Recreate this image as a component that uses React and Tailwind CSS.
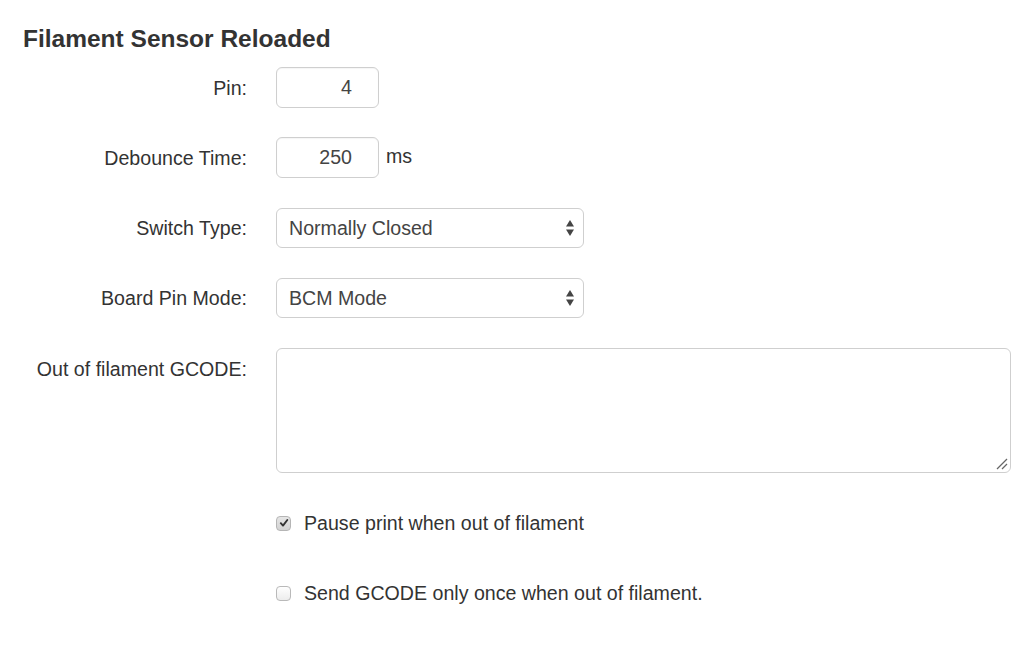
import React from "react";

function Label({ children, className = "" }) {
  return (
    <div className={"w-[224px] shrink-0 text-right text-[19.6px] text-[#333] leading-[28px] " + className}>
      {children}
    </div>
  );
}

function Arrows() {
  return (
    <svg width="10" height="18" viewBox="0 0 10 18" className="absolute right-[8px] top-[10px]">
      <path d="M1 7.5 L5 1 L9 7.5 Z" fill="#444" />
      <path d="M1 10.5 L5 17 L9 10.5 Z" fill="#444" />
    </svg>
  );
}

function Select({ value }) {
  return (
    <div className="relative w-[308px] h-[40px] rounded-[6px] border border-[#cfcfcf] bg-white flex items-center pl-[12px] pt-[2px] text-[19.6px] text-[#444]">
      {value}
      <Arrows />
    </div>
  );
}

function NumInput({ value }) {
  return (
    <div className="w-[103px] h-[41px] rounded-[6px] border border-[#cfcfcf] bg-white flex items-center justify-end pr-[26px] pt-[1px] text-[19.6px] text-[#444] shadow-[inset_0_1px_1px_rgba(0,0,0,0.04)]">
      {value}
    </div>
  );
}

function Checkbox({ checked }) {
  return (
    <div
      className={
        "w-[15px] h-[15px] rounded-[4px] border flex items-center justify-center " +
        (checked
          ? "border-[#b5b5b5] bg-gradient-to-b from-[#e6e6e6] to-[#d2d2d2]"
          : "border-[#b9b9b9] bg-gradient-to-b from-[#ffffff] to-[#ececec]")
      }
    >
      {checked && (
        <svg width="10" height="10" viewBox="0 0 10 10">
          <path d="M1.8 5.2 L4 7.6 L8.3 2" fill="none" stroke="#333" strokeWidth="1.9" strokeLinecap="round" strokeLinejoin="round" />
        </svg>
      )}
    </div>
  );
}

export default function App() {
  return (
    <div
      className="w-[1024px] h-[646px] bg-white pl-[23px] pt-[25px] overflow-hidden"
      style={{ fontFamily: '"Liberation Sans", Arial, Helvetica, sans-serif' }}
    >
      <h3 className="text-[24.5px] font-bold leading-[28px] text-[#333]">Filament Sensor Reloaded</h3>

      <div className="mt-[14px] flex flex-col">
        <div className="flex items-center gap-[29px] h-[41px]">
          <Label>Pin:</Label>
          <NumInput value="4" />
        </div>

        <div className="flex items-center gap-[29px] h-[41px] mt-[29px]">
          <Label>Debounce Time:</Label>
          <div className="flex items-start h-[41px]">
            <NumInput value="250" />
            <span className="ml-[7px] mt-[5px] text-[19.6px] leading-[28px] text-[#333]">ms</span>
          </div>
        </div>

        <div className="flex items-center gap-[29px] h-[40px] mt-[30px]">
          <Label>Switch Type:</Label>
          <Select value="Normally Closed" />
        </div>

        <div className="flex items-center gap-[29px] h-[40px] mt-[30px]">
          <Label>Board Pin Mode:</Label>
          <Select value="BCM Mode" />
        </div>

        <div className="flex items-start gap-[29px] mt-[30px]">
          <Label className="pt-[7px]">Out of filament GCODE:</Label>
          <div className="relative w-[735px] h-[125px] rounded-[6px] border border-[#cfcfcf] bg-white">
            <svg width="12" height="12" viewBox="0 0 12 12" className="absolute right-[2px] bottom-[2px]">
              <path d="M1 11 L11 1" stroke="#666" strokeWidth="1.2" />
              <path d="M6 11 L11 6" stroke="#666" strokeWidth="1.2" />
            </svg>
          </div>
        </div>

        <div className="flex items-center ml-[253px] mt-[36px] h-[28px]">
          <Checkbox checked />
          <span className="ml-[13px] text-[19.6px] leading-[28px] text-[#333]">Pause print when out of filament</span>
        </div>

        <div className="flex items-center ml-[253px] mt-[42px] h-[28px]">
          <Checkbox />
          <span className="ml-[13px] text-[19.6px] leading-[28px] text-[#333]">Send GCODE only once when out of filament.</span>
        </div>
      </div>
    </div>
  );
}
